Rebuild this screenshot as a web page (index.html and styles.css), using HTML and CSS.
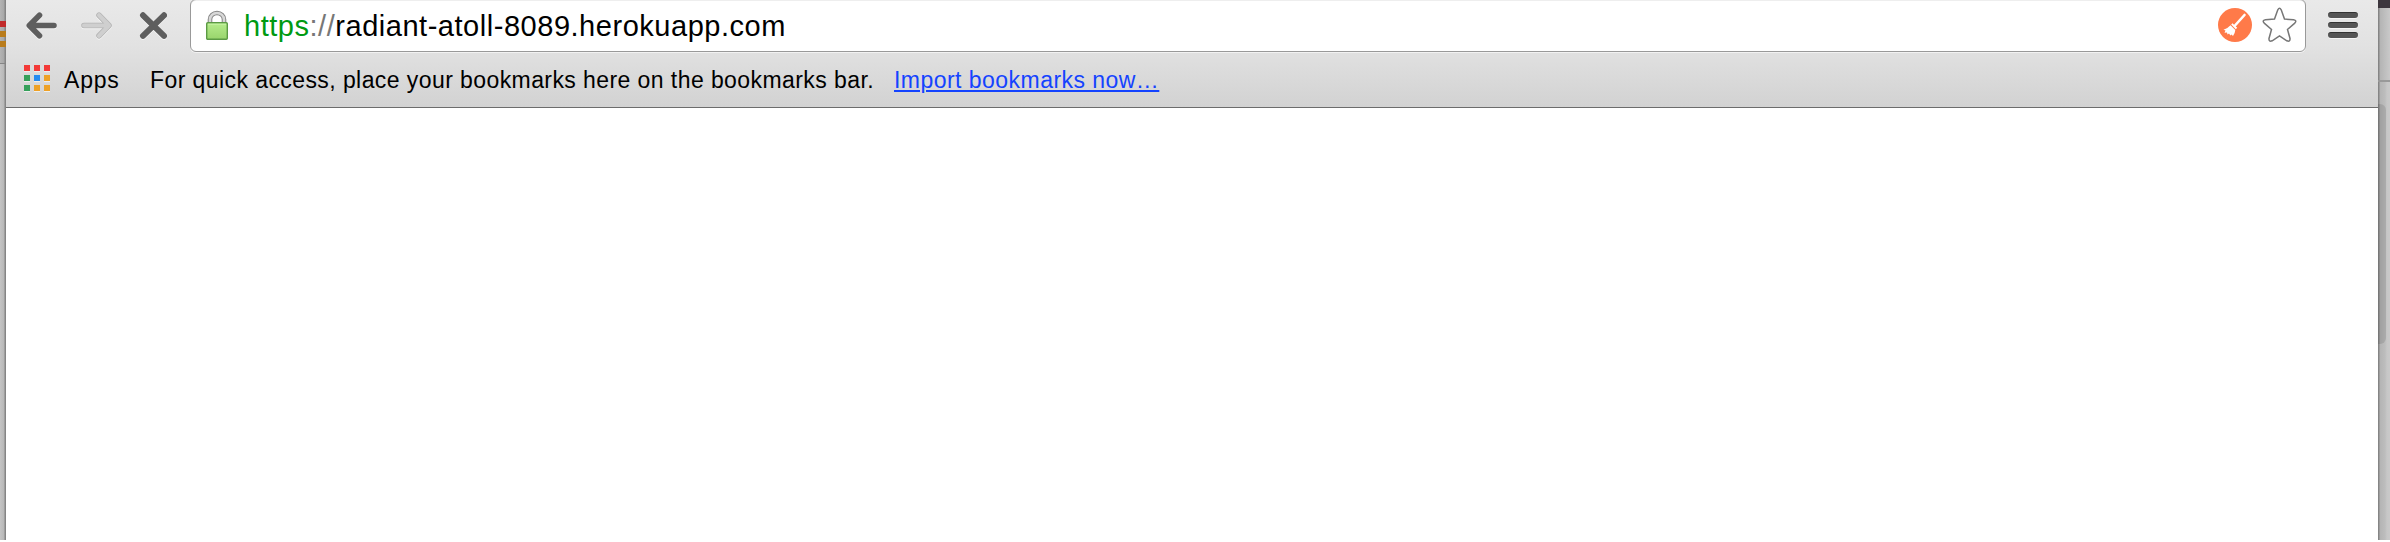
FILE: index.html
```html
<!DOCTYPE html>
<html lang="en">
<head>
<meta charset="utf-8">
<title>radiant-atoll-8089.herokuapp.com</title>
<link rel="stylesheet" href="styles.css">
</head>
<body>
<div class="desktop">
  <aside class="behind-left">
    <div class="behind-tools"><i class="bar red"></i><i class="bar amber"></i><i class="bar amber"></i></div>
  </aside>
  <main class="window">
    <header class="chrome">
      <div class="toolbar">
        <svg class="nav" width="142" height="32" viewBox="0 0 142 32" fill="none" stroke-width="5.6" stroke-linecap="round" stroke-linejoin="round">
          <path stroke="#5e5e5e" d="M13.500 5.200 3.300 15.500 13.500 25.800M4 15.500H28"/>
          <path stroke="#b5b5b5" d="M73 5.200 83 15.500 73 25.800M82 15.500H58"/>
          <path stroke="#cfcfcf" stroke-width="4" d="M73 5.200 83 15.500 73 25.800M82 15.500H58"/>
          <path stroke="#5e5e5e" stroke-width="6" d="M117 5.300 138 25.800M138 5.300 117 25.800"/>
        </svg>
        <div class="omnibox">
          <svg class="lock" width="24" height="32" viewBox="0 0 24 32">
            <defs><linearGradient id="body" x2="0" y2="1"><stop stop-color="#b6ec8c"/><stop offset="1" stop-color="#98d46c"/></linearGradient></defs>
            <path d="M5 13V9.500a7 6.500 0 0 1 14 0V13" fill="none" stroke="#858585" stroke-width="4.600"/>
            <path d="M5 13V9.500a7 6.500 0 0 1 14 0V13" fill="none" stroke="#d8d8d8" stroke-width="2.600"/>
            <rect x="1.700" y="12.700" width="20.600" height="16.600" rx="1" fill="url(#body)" stroke="#5b9a44" stroke-width="1.400"/>
            <path d="M3 14.200H21" stroke="#c9f5a6"/>
          </svg>
          <span class="url"><span class="scheme">https</span><span class="sep">://</span><span class="host">radiant-atoll-8089.herokuapp.com</span></span>
          <svg class="actions" width="82" height="38" viewBox="0 0 82 38">
            <circle cx="18" cy="18" r="17" fill="#ff7a49"/>
            <path d="M27.500 8 18 18.500" stroke="#fff" stroke-width="2.600" stroke-linecap="round"/>
            <path d="M15.500 16.200 20.200 20.800 18.800 22.200 14.200 17.600ZM13.500 18.200 18.300 22.900Q18 26.500 16 29L14.500 27.500 13.500 28.500 12 26.500 10.500 27.500 10 25.500 7.500 25.800 8.500 23.500 6.500 22.800Q10.500 21.500 13.500 18.200Z" fill="#fff"/>
            <path d="M60.800 2.800Q62.500-.2 64.200 2.800L67.500 12.100 76.500 12.700Q80.500 13.500 77.500 16.400L70.500 22.400 73 31.500Q73.300 35.300 69.800 33.800L62.500 28.900 55.200 33.800Q51.700 35.300 52 31.500L54.500 22.400 47.500 16.400Q44.500 13.500 48.500 12.700L57.500 12.100Z" class="star"/>
          </svg>
        </div>
        <div class="menu"><i></i><i></i><i></i></div>
      </div>
      <nav class="bookmarks">
        <div class="apps-grid"><i class="r"></i><i class="r"></i><i class="r"></i><i class="g"></i><i class="b"></i><i class="y"></i><i class="g"></i><i class="y"></i><i class="y"></i></div>
        <span class="apps">Apps</span>
        <span class="hint">For quick access, place your bookmarks here on the bookmarks bar.</span>
        <a class="import">Import bookmarks now…</a>
      </nav>
    </header>
    <section class="page"></section>
  </main>
  <aside class="behind-right">
    <div class="title-edge"></div><div class="tool-edge"></div><div class="gap"></div><div class="thumb"></div>
  </aside>
</div>
</body>
</html>
```
FILE: styles.css
```css
* { box-sizing: border-box; }
body { margin: 0; height: 542px; overflow: hidden; background: #fff; font-family: "Liberation Sans", Arial, sans-serif; }
.desktop { display: flex; height: 540px; }

.behind-left { width: 6px; background: linear-gradient(90deg, #c4c4c4, #b8b8b8 4px, #858585 5px); }
.behind-tools { height: 64px; padding-top: 21px; display: flex; flex-direction: column; gap: 4px; border-bottom: 1px solid #858585; background: linear-gradient(90deg, #b4b4b4, #a8a8a8 4px, #858585 5px); }
.bar { height: 6px; }
.red { background: #c12b2b; }
.amber { background: #b97c1c; }

.window { width: 2372px; display: flex; flex-direction: column; }
.chrome { height: 108px; background: linear-gradient(#e9e9e9, #e2e2e2 45px, #d2d2d2); border-bottom: 1px solid #6c6c6c; }
.toolbar { display: flex; height: 52px; }
.nav { margin: 10px 0 0 20px; overflow: visible; filter: drop-shadow(0 1px 0 #f4f4f4); }
.omnibox { width: 2116px; height: 53px; margin: -1px 0 0 22px; display: flex; background: #fff; border: 1px solid #999; border-radius: 6px; box-shadow: 0 1px 0 #f2f2f2, inset 0 1px 0 #eee; }
.lock { margin: 10px 0 0 14px; }
.url { margin-left: 15px; font-size: 29px; line-height: 53px; letter-spacing: 0.53px; white-space: pre; }
.scheme { color: #009a12; }
.sep { color: #777; }
.host { color: #000; }
.actions { margin: 7px 6px 0 auto; }
.star { fill: #fff; stroke: #777; stroke-width: 1.5; }
.menu { margin: 12px 0 0 22px; display: flex; flex-direction: column; gap: 4px; }
.menu i { width: 30px; height: 6px; border-radius: 3px; background: #555; border-top: 1px solid #333; box-shadow: 0 1px 0 #f5f5f5; }

.bookmarks { height: 55px; display: flex; font-size: 23px; line-height: 26px; white-space: pre; }
.apps-grid { margin: 13px 0 0 18px; display: grid; grid-template-columns: repeat(3, 6px); grid-auto-rows: 6px; gap: 4px; }
.apps-grid i { box-shadow: 0 1px 0 #eee; }
.r { background: #f33a38; }
.g { background: #35a05a; }
.b { background: #268bf0; }
.y { background: #eea126; }
.apps { margin: 15px 0 0 14px; width: 86px; letter-spacing: 0.8px; }
.hint { margin-top: 15px; width: 744px; letter-spacing: 0.42px; }
.import { margin-top: 15px; color: #1443ff; letter-spacing: 0.46px; text-decoration: underline; text-decoration-thickness: 2px; text-underline-offset: 2px; }
.page { flex: 1; background: #fff; }

.behind-right { width: 12px; background: linear-gradient(90deg, #858585 1px, #b4b4b4 2px, #bdbdbd 7px, #c7c7c7 9px, #c9c9c9); }
.title-edge { height: 8px; background: #3c363d; }
.tool-edge { height: 74px; background: linear-gradient(90deg, #858585 1px, #b4b4b4 2px, #c9c9c9); border-bottom: 2px solid #999; }
.gap { height: 22px; }
.thumb { width: 8px; height: 240px; border-radius: 0 6px 6px 0; background: linear-gradient(90deg, #777 1px, #a0a0a0 2px, #acacac); }
```
